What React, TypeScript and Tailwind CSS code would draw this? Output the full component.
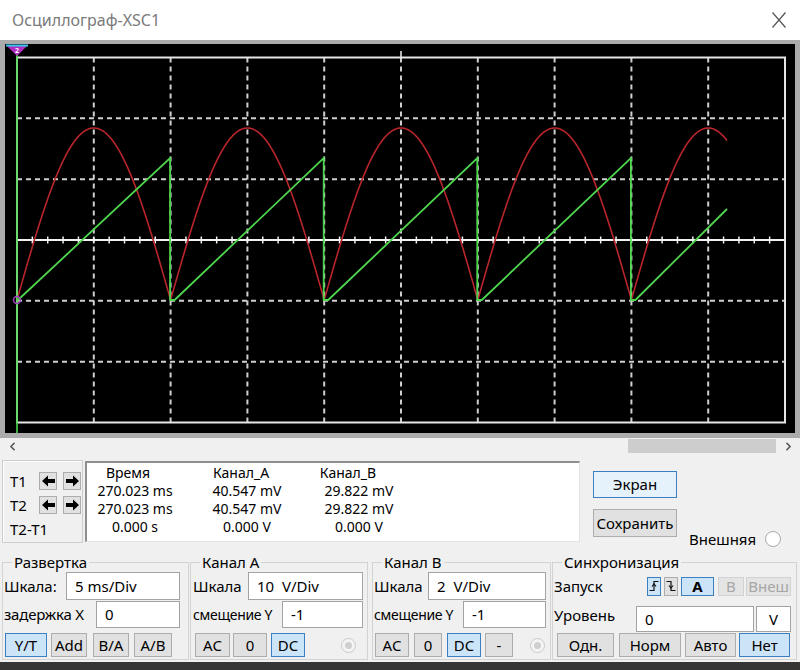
import { ChevronLeft, ChevronRight } from "lucide-react";
import clsx from "clsx";
import type { ReactNode } from "react";

// scope grid geometry (page coordinates, svg viewBox matches the page)
const X0 = 17;
const X1 = 785;
const Y0 = 57.5;
const Y1 = 422.5;
const DX = (X1 - X0) / 10;
const DY = (Y1 - Y0) / 6;
const YC = Y0 + 3 * DY;
const XC = X0 + 5 * DX;
const BASE = 300;

function redPath() {
  const pts: string[] = [];
  for (let x = X0; x <= 727; x += 1) {
    const y = BASE - 172 * Math.abs(Math.sin((Math.PI * (x - X0)) / (2 * DX)));
    pts.push(`${x},${y.toFixed(1)}`);
  }
  return "M" + pts.join(" L");
}

function greenPath() {
  const P = 2 * DX;
  let d = `M${X0 + 1},${BASE}`;
  for (let k = 0; k < 5; k++) {
    const xe = X0 + (k + 1) * P;
    if (k < 4) {
      d += ` L${(xe - 0.5).toFixed(1)},158 L${(xe - 0.5).toFixed(1)},${BASE} L${(xe + 4).toFixed(1)},${BASE}`;
    } else {
      d += ` L727,209`;
    }
  }
  return d;
}

function Scope() {
  const vlines = Array.from({ length: 9 }, (_, i) => X0 + (i + 1) * DX);
  const hlines = [1, 2, 4, 5].map((j) => Y0 + j * DY);
  const ticks = Array.from({ length: 51 }, (_, i) => X0 + (i * DX) / 5);

  return (
    <svg width={790} height={389} viewBox="5 44 790 389" className="block">
      <rect x={5} y={44} width={790} height={389} fill="#000" />
      {vlines.map((x) => (
        <line key={"v" + x} x1={x} y1={Y0} x2={x} y2={Y1} stroke="#cfcfcf" strokeWidth={2} strokeDasharray="5 4" />
      ))}
      {hlines.map((y) => (
        <line key={"h" + y} x1={X0} y1={y} x2={X1} y2={y} stroke="#cfcfcf" strokeWidth={2} strokeDasharray="5 4" />
      ))}
      <line x1={X0} y1={YC} x2={X1} y2={YC} stroke="#f2f2f2" strokeWidth={2} />
      {ticks.map((x) => (
        <line key={"t" + x} x1={x} y1={YC - 3.5} x2={x} y2={YC + 3.5} stroke="#f2f2f2" strokeWidth={1.5} />
      ))}
      <line x1={XC} y1={51} x2={XC} y2={Y0} stroke="#f2f2f2" strokeWidth={1.5} />
      <rect x={X0} y={Y0} width={X1 - X0} height={Y1 - Y0} fill="none" stroke="#e6e6e6" strokeWidth={2} />

      <path d={redPath()} fill="none" stroke="#b8262c" strokeWidth={1.6} />
      <path d={greenPath()} fill="none" stroke="#4fd64f" strokeWidth={1.8} />

      {/* T1 / T2 cursor */}
      <line x1={17} y1={52} x2={17} y2={433} stroke="#4fd64f" strokeWidth={1.6} />
      <polygon points="6,45 28,45 17,56" fill="#b22dbf" />
      <line x1={6} y1={45.5} x2={28} y2={45.5} stroke="#36c8ee" strokeWidth={2} />
      <text x={17} y={52.5} fontSize={7} fill="#fff" textAnchor="middle" fontFamily="Noto Sans, sans-serif" fontWeight={700}>
        2
      </text>
      <circle cx={17} cy={BASE} r={3.5} fill="none" stroke="#a040c0" strokeWidth={1.5} />
    </svg>
  );
}

function Btn({ children, className, on, off }: { children: ReactNode; className?: string; on?: boolean; off?: boolean }) {
  return (
    <div
      className={clsx(
        "h-full flex items-center justify-center border text-[15px] leading-none",
        on && "bg-[#cce4f7] border-[#3c7fbf] text-black",
        off && "bg-[#e4e4e4] border-[#d2d2d2] text-[#a6a6a6]",
        !on && !off && "bg-[#e1e1e1] border-[#adadad] text-black",
        className
      )}
    >
      {children}
    </div>
  );
}

function Field({ value, className }: { value: string; className?: string }) {
  return (
    <div className={clsx("h-full bg-white border border-[#a3a3a3] flex items-center pl-[8px] text-[15px] whitespace-pre", className)}>
      {value}
    </div>
  );
}

function Radio({ className }: { className?: string }) {
  return (
    <div className={clsx("w-[15px] h-[15px] rounded-full border border-[#c9c9c9] bg-[#f4f4f4] flex items-center justify-center", className)}>
      <div className="w-[7px] h-[7px] rounded-full bg-[#cfcfcf]" />
    </div>
  );
}

function Group({ title, className, children }: { title: string; className?: string; children: ReactNode }) {
  return (
    <fieldset className={clsx("h-[108px] border border-[#d3d3d3]", className)}>
      <legend className="ml-[9px] px-[2px] text-[15px] leading-[20px]">{title}</legend>
      <div className="flex flex-col">{children}</div>
    </fieldset>
  );
}

function EdgeIcon({ up }: { up?: boolean }) {
  return (
    <svg width={10} height={12} viewBox="0 0 10 12">
      <path d={up ? "M0.5 10.5 H5 V1.5 H9.5" : "M0.5 1.5 H5 V10.5 H9.5"} fill="none" stroke="#111" strokeWidth={1.2} />
      <path d={up ? "M3 6.5 L5 4 L7 6.5" : "M3 5.5 L5 8 L7 5.5"} fill="none" stroke="#111" strokeWidth={1.2} />
    </svg>
  );
}

// heavy filled arrow used on the cursor buttons
function Arrow({ right }: { right?: boolean }) {
  return (
    <svg width={13} height={12} viewBox="0 0 13 12" style={{ transform: right ? "scaleX(-1)" : undefined }}>
      <polygon points="0,6 6,0.5 6,4 13,4 13,8 6,8 6,11.5" fill="#000" />
    </svg>
  );
}

const readout = [
  ["270.023 ms", "40.547 mV", "29.822 mV"],
  ["270.023 ms", "40.547 mV", "29.822 mV"],
  ["0.000 s", "0.000 V", "0.000 V"],
];

export default function App() {
  return (
    <div className="w-[800px] h-[670px] overflow-hidden bg-[#f0f0f0] flex flex-col font-['Noto_Sans',sans-serif] text-black">
      {/* title bar */}
      <div className="h-[40px] bg-white flex items-center justify-between pl-[12px] pr-[13px]">
        <span className="text-[16px] text-[#7a7a7a]">Осциллограф-XSC1</span>
        <svg width={16} height={18} viewBox="0 0 16 18">
          <path d="M1.5 1.5 L14.5 16.5 M14.5 1.5 L1.5 16.5" stroke="#555" strokeWidth={1.2} />
        </svg>
      </div>

      {/* screen */}
      <div className="h-[398px] border-x-[5px] border-t-[4px] border-b-[5px] border-[#ababab] bg-black">
        <Scope />
      </div>

      {/* scrollbar */}
      <div className="h-[20px] flex items-start">
        <div className="w-[24px] h-[17px] flex items-center justify-center text-[#555]">
          <ChevronLeft size={13} strokeWidth={3} />
        </div>
        <div className="flex-1" />
        <div className="mt-[1px] w-[148px] h-[14px] bg-[#cdcdcd]" />
        <div className="w-[24px] h-[17px] flex items-center justify-center text-[#555]">
          <ChevronRight size={13} strokeWidth={3} />
        </div>
      </div>

      {/* cursors, readout, buttons */}
      <div className="h-[90px] flex items-start">
        <div className="mt-[2px] ml-[2px] w-[81px] h-[83px] border border-[#cdcdcd] shadow-[inset_1px_1px_0_#fff] pl-[7px] pt-[11px] text-[15px]">
          <div className="h-[18px] flex items-center">
            <span className="w-[29px]">T1</span>
            <Btn className="w-[18px]">
              <Arrow />
            </Btn>
            <Btn className="w-[18px] ml-[6px]">
              <Arrow right />
            </Btn>
          </div>
          <div className="mt-[6px] h-[18px] flex items-center">
            <span className="w-[29px]">T2</span>
            <Btn className="w-[18px]">
              <Arrow />
            </Btn>
            <Btn className="w-[18px] ml-[6px]">
              <Arrow right />
            </Btn>
          </div>
          <div className="mt-[6px] h-[18px] flex items-center">T2-T1</div>
        </div>

        <div className="mt-[3px] ml-[2px] w-[495px] h-[81px] bg-white border-t-2 border-l-2 border-r border-b border-t-[#8e8e8e] border-l-[#8e8e8e] border-r-[#e3e3e3] border-b-[#e3e3e3] pt-[1px] text-[14px] leading-[18px]">
          <div className="flex gap-[16px]">
            <div className="w-[96px] text-center pr-[14px]">Время</div>
            <div className="w-[96px] text-center pr-[12px]">Канал_А</div>
            <div className="w-[96px] text-center pr-[22px]">Канал_B</div>
          </div>
          {readout.map((row, i) => (
            <div key={i} className="flex gap-[16px]">
              {row.map((v, j) => (
                <div key={j} className="w-[96px] text-center">
                  {v}
                </div>
              ))}
            </div>
          ))}
        </div>

        <div className="ml-[13px] mt-[13px] w-[84px] flex flex-col">
          <div className="h-[27px]">
            <Btn on className="bg-[#e5f1fb]">Экран</Btn>
          </div>
          <div className="h-[28px] mt-[11px]">
            <Btn>Сохранить</Btn>
          </div>
        </div>

        <div className="ml-[12px] mt-[70px] flex items-center text-[15px]">
          <span>Внешняя</span>
          <div className="ml-[9px] w-[16px] h-[16px] rounded-full border border-[#a9a9a9] bg-white" />
        </div>
      </div>

      {/* control groups */}
      <div className="h-[114px] pt-[4px] flex text-[15px]">
        <Group title="Развертка" className="ml-[2px] w-[187px]">
          <div className="h-[28px] flex items-center">
            <span className="w-[63px] pl-[1px]">Шкала:</span>
            <Field value="5 ms/Div" className="w-[114px]" />
          </div>
          <div className="mt-[1px] h-[27px] flex items-center">
            <span className="w-[93px] pl-[1px] tracking-[-0.2px]">задержка X</span>
            <Field value="0" className="w-[84px]" />
          </div>
          <div className="mt-[5px] h-[24px] flex">
            <Btn on className="w-[42px] ml-[2px]">Y/T</Btn>
            <Btn className="w-[36px] ml-[4px]">Add</Btn>
            <Btn className="w-[36px] ml-[6px]">B/A</Btn>
            <Btn className="w-[38px] ml-[5px]">A/B</Btn>
          </div>
        </Group>

        <Group title="Канал А" className="ml-[1px] w-[178px]">
          <div className="h-[28px] flex items-center">
            <span className="w-[57px] pl-[2px]">Шкала</span>
            <Field value="10  V/Div" className="w-[115px]" />
          </div>
          <div className="mt-[1px] h-[27px] flex items-center">
            <span className="w-[91px] pl-[2px] text-[14px] tracking-[-0.3px] whitespace-nowrap">смещение Y</span>
            <Field value="-1" className="w-[81px]" />
          </div>
          <div className="mt-[5px] h-[24px] flex items-center">
            <Btn className="w-[35px] ml-[4px]">AC</Btn>
            <Btn className="w-[34px] ml-[3px]">0</Btn>
            <Btn on className="w-[34px] ml-[4px]">DC</Btn>
            <Radio className="ml-[36px]" />
          </div>
        </Group>

        <Group title="Канал В" className="ml-[4px] w-[179px]">
          <div className="h-[28px] flex items-center">
            <span className="w-[55px] pl-[1px]">Шкала</span>
            <Field value="2  V/Div" className="w-[118px]" />
          </div>
          <div className="mt-[1px] h-[27px] flex items-center">
            <span className="w-[90px] pl-[1px] text-[14px] tracking-[-0.3px] whitespace-nowrap">смещение Y</span>
            <Field value="-1" className="w-[83px]" />
          </div>
          <div className="mt-[5px] h-[24px] flex items-center">
            <Btn className="w-[34px] ml-[2px]">AC</Btn>
            <Btn className="w-[28px] ml-[5px]">0</Btn>
            <Btn on className="w-[34px] ml-[5px]">DC</Btn>
            <Btn className="w-[28px] ml-[4px]">-</Btn>
            <Radio className="ml-[17px]" />
          </div>
        </Group>

        <Group title="Синхронизация" className="ml-[1px] w-[245px]">
          <div className="h-[28px] flex items-center">
            <span className="w-[94px] pl-[1px]">Запуск</span>
            <div className="h-[19px] flex">
              <Btn on className="w-[14px]">
                <EdgeIcon up />
              </Btn>
              <Btn className="w-[14px] ml-[3px]">
                <EdgeIcon />
              </Btn>
              <Btn on className="w-[33px] ml-[3px] font-bold text-[14px]">A</Btn>
              <Btn off className="w-[26px] ml-[4px] text-[14px]">B</Btn>
              <Btn off className="w-[45px] ml-[2px] text-[14px]">Внеш</Btn>
            </div>
          </div>
          <div className="mt-[1px] h-[31px] flex items-center">
            <span className="w-[83px] pl-[1px] self-start mt-[3px]">Уровень</span>
            <div className="h-[26px] self-end flex">
              <Field value="0" className="w-[118px]" />
              <div className="w-[35px] ml-[2px] h-full bg-white border border-[#a3a3a3] flex items-center justify-center">V</div>
            </div>
          </div>
          <div className="mt-[1px] h-[24px] flex">
            <Btn className="w-[57px] ml-[4px]">Одн.</Btn>
            <Btn className="w-[62px] ml-[5px]">Норм</Btn>
            <Btn className="w-[51px] ml-[4px]">Авто</Btn>
            <Btn on className="w-[51px] ml-[3px]">Нет</Btn>
          </div>
        </Group>
      </div>

      <div className="h-[8px] bg-[#353535]" />
    </div>
  );
}
